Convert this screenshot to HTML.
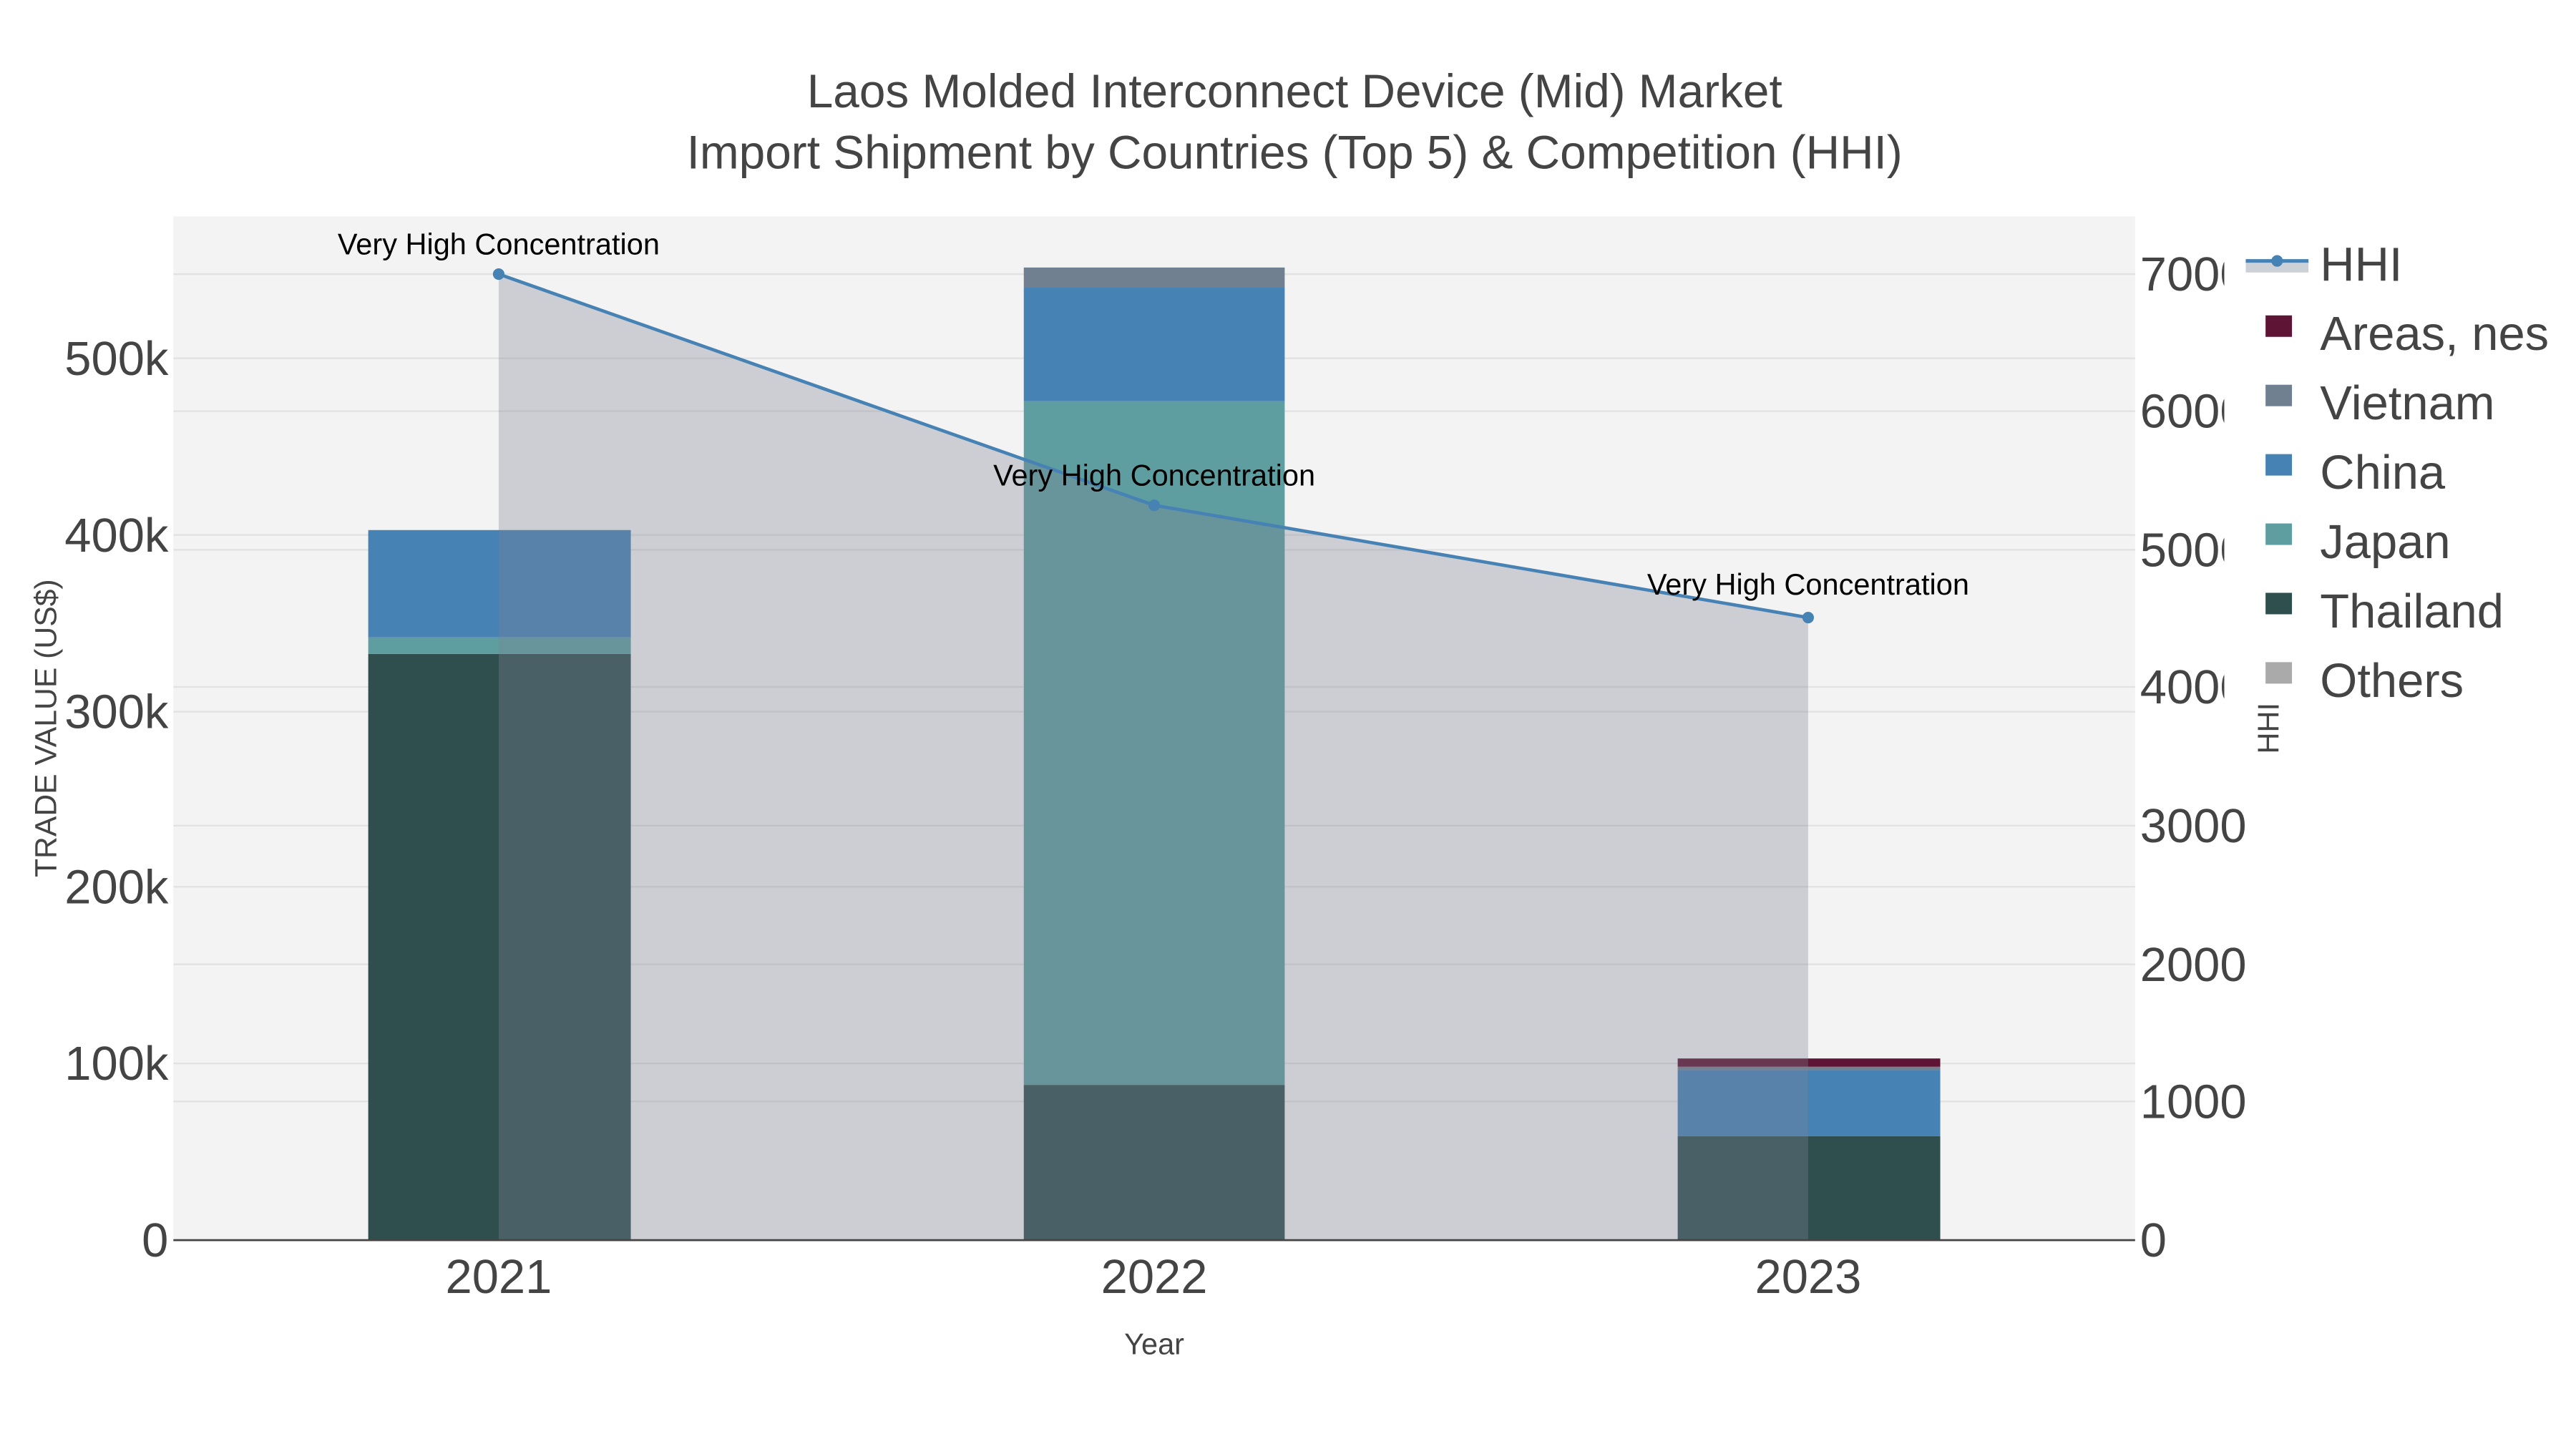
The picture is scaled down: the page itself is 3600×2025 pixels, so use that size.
<!DOCTYPE html>
<html><head><meta charset="utf-8"><style>
html,body{margin:0;padding:0;background:#fff;}
svg{display:block;}
text{font-family:"Liberation Sans",sans-serif;}
</style></head><body>
<svg width="3600" height="2025" viewBox="0 0 1560 877.5" xmlns="http://www.w3.org/2000/svg">
<rect width="1560" height="877.5" fill="#fff"/>
<text x="784" y="65" font-size="28.5" fill="#444" text-anchor="middle">Laos Molded Interconnect Device (Mid) Market</text>
<text x="784" y="102" font-size="28.5" fill="#444" text-anchor="middle">Import Shipment by Countries (Top 5) &amp; Competition (HHI)</text>
<rect x="105" y="131" width="1188" height="620" fill="#f3f3f3"/>
<g stroke="#e2e2e2" stroke-width="1">
<line x1="105" x2="1293" y1="644" y2="644"/><line x1="105" x2="1293" y1="537" y2="537"/>
<line x1="105" x2="1293" y1="431" y2="431"/><line x1="105" x2="1293" y1="324" y2="324"/>
<line x1="105" x2="1293" y1="217" y2="217"/>
<line x1="105" x2="1293" y1="667" y2="667"/><line x1="105" x2="1293" y1="584" y2="584"/>
<line x1="105" x2="1293" y1="500" y2="500"/><line x1="105" x2="1293" y1="416" y2="416"/>
<line x1="105" x2="1293" y1="333" y2="333"/><line x1="105" x2="1293" y1="249" y2="249"/>
<line x1="105" x2="1293" y1="166" y2="166"/>
</g>
<rect x="223" y="396" width="159" height="355" fill="#2f4f4f"/>
<rect x="223" y="386" width="159" height="10" fill="#5f9ea0"/>
<rect x="223" y="321" width="159" height="65" fill="#4682b4"/>
<rect x="620" y="657" width="158" height="94" fill="#2f4f4f"/>
<rect x="620" y="243" width="158" height="414" fill="#5f9ea0"/>
<rect x="620" y="174" width="158" height="69" fill="#4682b4"/>
<rect x="620" y="162" width="158" height="12" fill="#708090"/>
<rect x="1016" y="688" width="159" height="63" fill="#2f4f4f"/>
<rect x="1016" y="648" width="159" height="40" fill="#4682b4"/>
<rect x="1016" y="646" width="159" height="2" fill="#708090"/>
<rect x="1016" y="641" width="159" height="5" fill="#5e1434"/>
<polygon points="302,166 699,306 1095,374 1095,751 302,751" fill="rgb(124,130,150)" fill-opacity="0.33"/>
<polyline points="302,166 699,306 1095,374" fill="none" stroke="#4682b4" stroke-width="2"/>
<circle cx="302" cy="166" r="3.5" fill="#4682b4"/><circle cx="699" cy="306" r="3.5" fill="#4682b4"/><circle cx="1095" cy="374" r="3.5" fill="#4682b4"/>
<g font-size="18" fill="#000" text-anchor="middle">
<text x="302" y="154">Very High Concentration</text>
<text x="699" y="294">Very High Concentration</text>
<text x="1095" y="360">Very High Concentration</text>
</g>
<line x1="105" x2="1293" y1="751" y2="751" stroke="#444" stroke-width="1.2"/>
<g font-size="29" fill="#444" text-anchor="end">
<text x="102" y="761">0</text><text x="102" y="654">100k</text><text x="102" y="547">200k</text>
<text x="102" y="441">300k</text><text x="102" y="334">400k</text><text x="102" y="227">500k</text>
</g>
<g font-size="29" fill="#444">
<text x="1296" y="761">0</text><text x="1296" y="677">1000</text><text x="1296" y="594">2000</text>
<text x="1296" y="510">3000</text><text x="1296" y="426">4000</text><text x="1296" y="343">5000</text>
<text x="1296" y="259">6000</text><text x="1296" y="176">7000</text>
</g>
<g font-size="29" fill="#444" text-anchor="middle">
<text x="302" y="783">2021</text><text x="699" y="783">2022</text><text x="1095" y="783">2023</text>
</g>
<text x="699" y="820" font-size="18" fill="#444" text-anchor="middle">Year</text>
<text transform="translate(34,441) rotate(-90)" font-size="18.5" fill="#444" text-anchor="middle">TRADE VALUE (US$)</text>
<rect x="1347" y="138" width="213" height="290" fill="#fff"/>
<text transform="translate(1380,441) rotate(-90)" font-size="18" fill="#444" text-anchor="middle">HHI</text>
<rect x="1360" y="158" width="38" height="7" fill="#ccd0d7"/>
<line x1="1360" x2="1398" y1="158" y2="158" stroke="#4682b4" stroke-width="2.2"/>
<circle cx="1379" cy="158" r="3.5" fill="#4682b4"/>
<rect x="1372" y="191" width="16" height="13" fill="#5e1434"/>
<rect x="1372" y="233" width="16" height="13" fill="#708090"/>
<rect x="1372" y="275" width="16" height="13" fill="#4682b4"/>
<rect x="1372" y="317" width="16" height="13" fill="#5f9ea0"/>
<rect x="1372" y="359" width="16" height="13" fill="#2f4f4f"/>
<rect x="1372" y="401" width="16" height="13" fill="#aaaaaa"/>
<g font-size="29" fill="#444">
<text x="1405" y="170">HHI</text><text x="1405" y="212">Areas, nes</text><text x="1405" y="254">Vietnam</text>
<text x="1405" y="296">China</text><text x="1405" y="338">Japan</text><text x="1405" y="380">Thailand</text>
<text x="1405" y="422">Others</text>
</g>
</svg>
</body></html>
